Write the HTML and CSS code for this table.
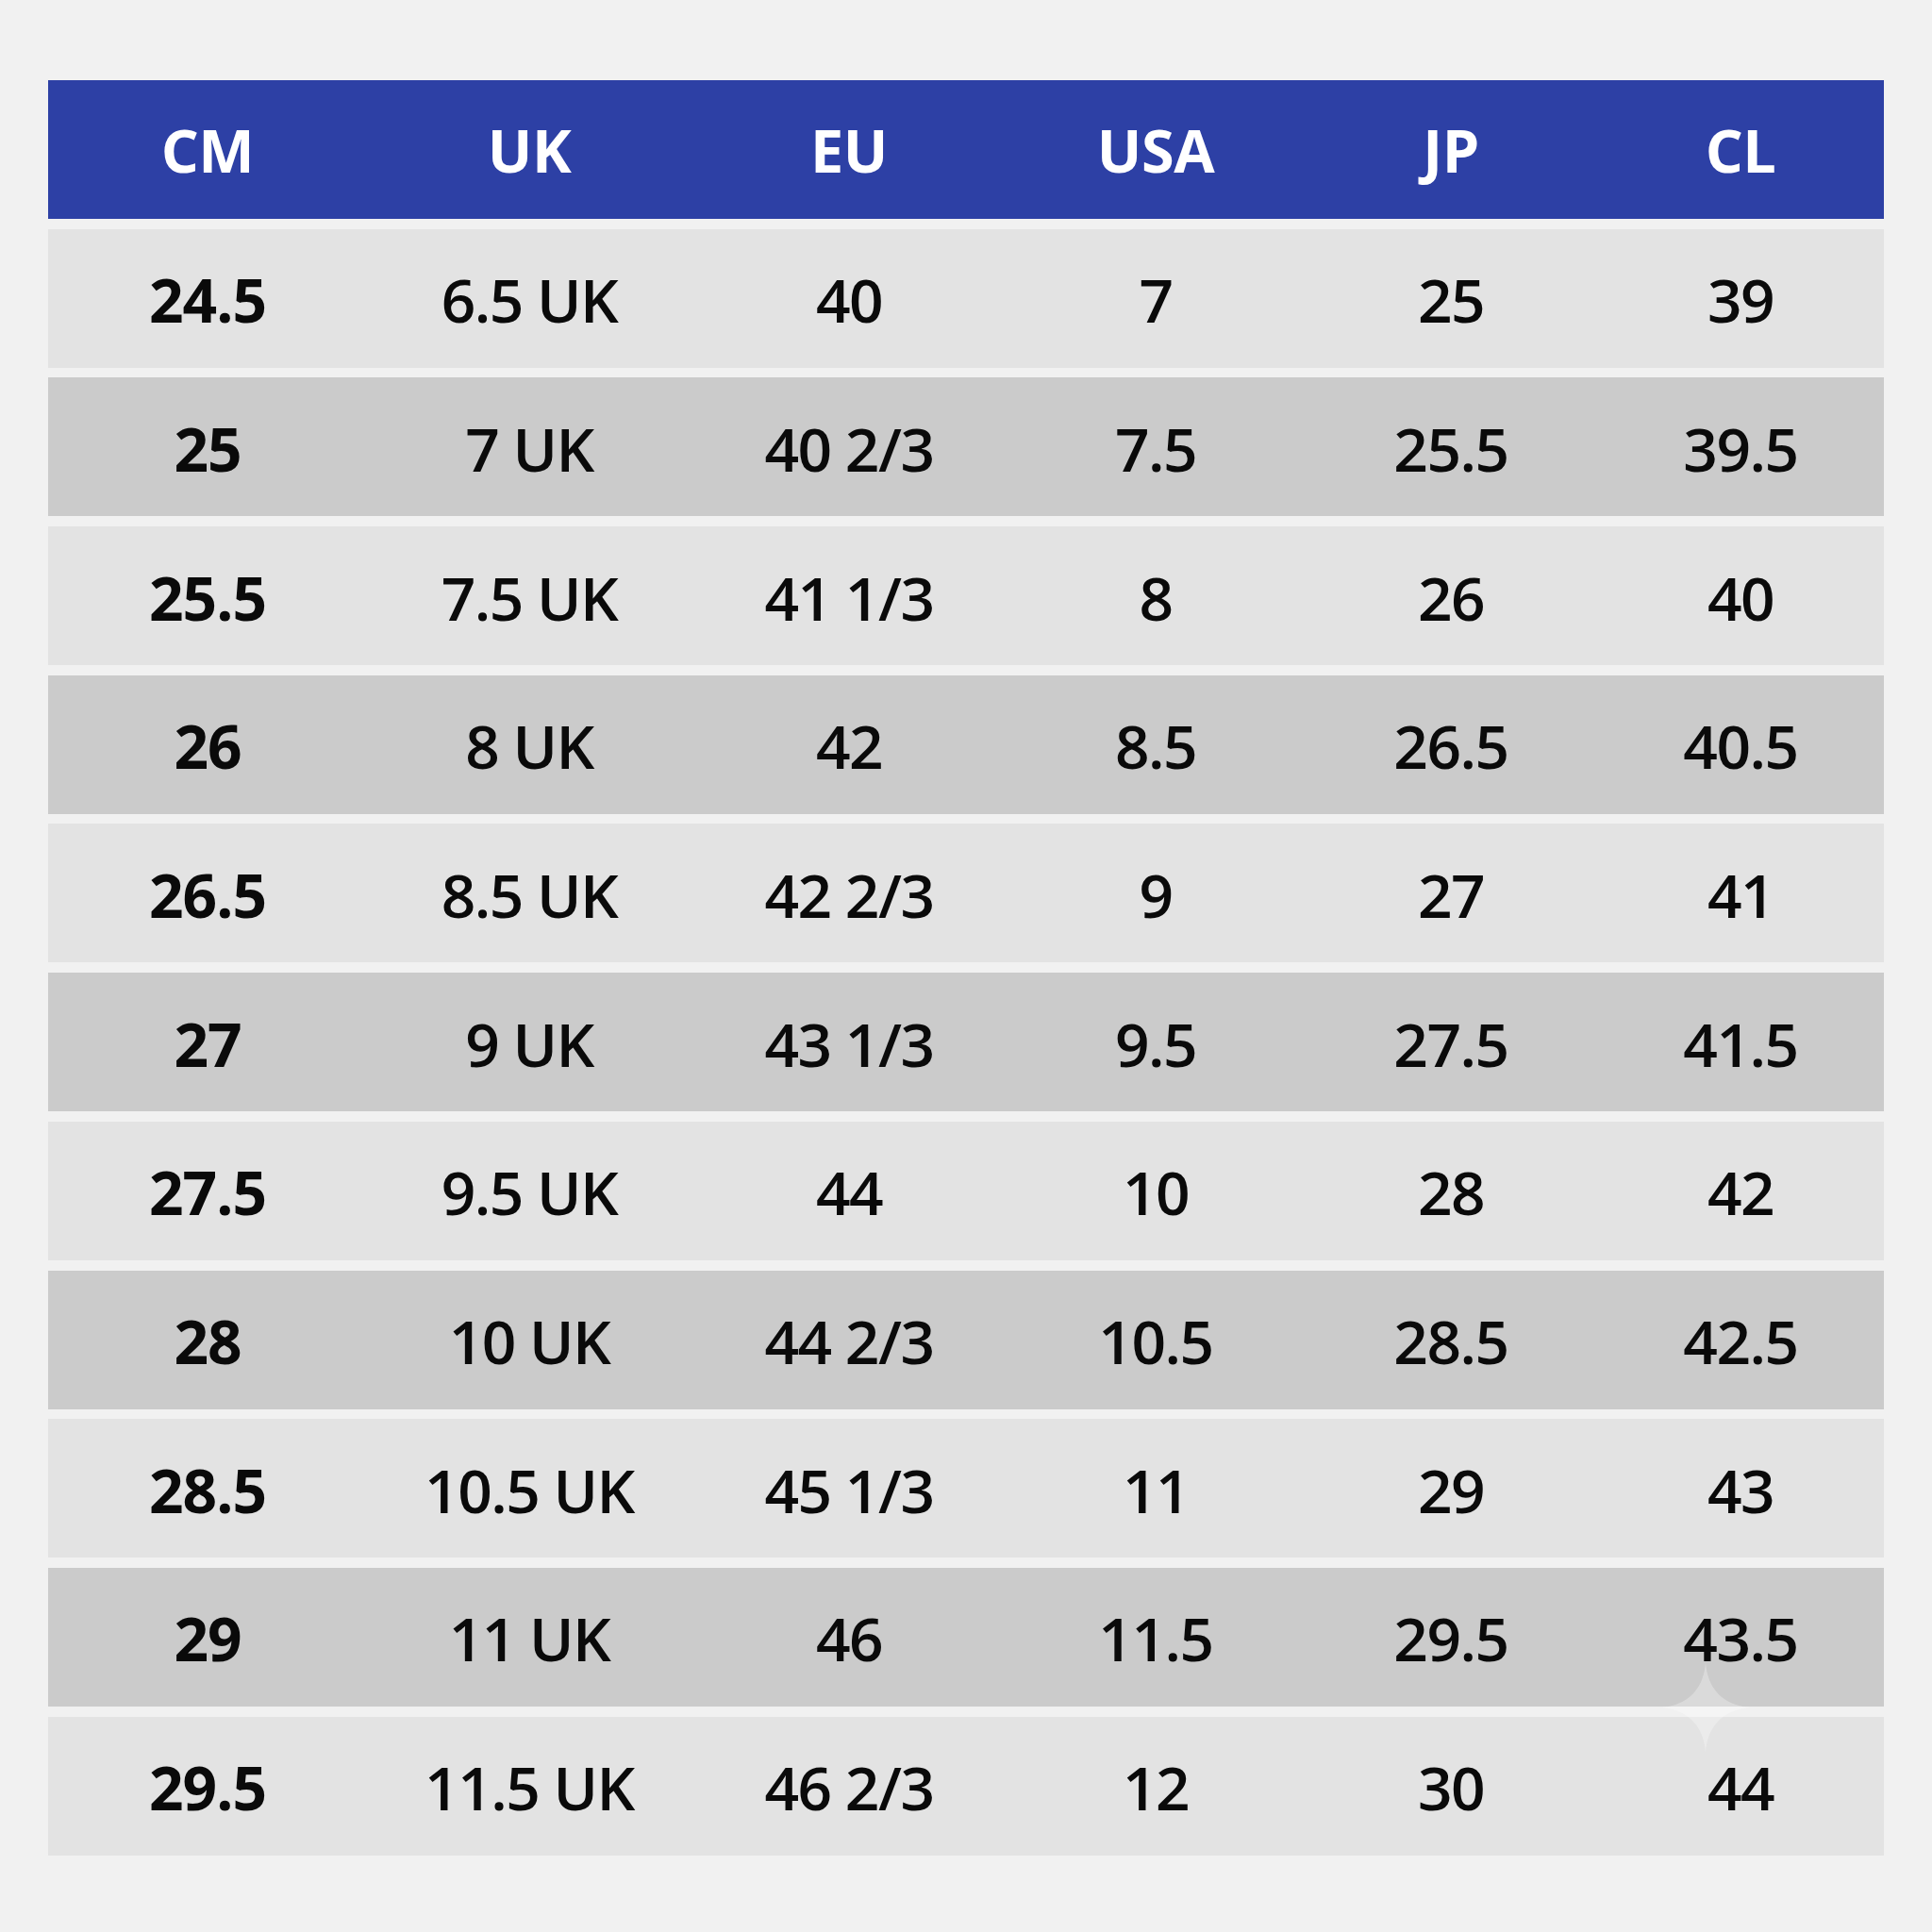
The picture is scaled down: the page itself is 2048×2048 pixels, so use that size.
FILE: index.html
```html
<!DOCTYPE html>
<html>
<head>
<meta charset="utf-8">
<link rel="stylesheet" href="styles.css">
</head>
<body>
<div class="table">
  <div class="row head"><div>CM</div><div>UK</div><div>EU</div><div>USA</div><div>JP</div><div>CL</div></div>
  <div class="row light"><div class="cm">24.5</div><div>6.5 UK</div><div>40</div><div>7</div><div>25</div><div>39</div></div>
  <div class="row dark"><div class="cm">25</div><div>7 UK</div><div>40 2/3</div><div>7.5</div><div>25.5</div><div>39.5</div></div>
  <div class="row light"><div class="cm">25.5</div><div>7.5 UK</div><div>41 1/3</div><div>8</div><div>26</div><div>40</div></div>
  <div class="row dark"><div class="cm">26</div><div>8 UK</div><div>42</div><div>8.5</div><div>26.5</div><div>40.5</div></div>
  <div class="row light"><div class="cm">26.5</div><div>8.5 UK</div><div>42 2/3</div><div>9</div><div>27</div><div>41</div></div>
  <div class="row dark"><div class="cm">27</div><div>9 UK</div><div>43 1/3</div><div>9.5</div><div>27.5</div><div>41.5</div></div>
  <div class="row light"><div class="cm">27.5</div><div>9.5 UK</div><div>44</div><div>10</div><div>28</div><div>42</div></div>
  <div class="row dark"><div class="cm">28</div><div>10 UK</div><div>44 2/3</div><div>10.5</div><div>28.5</div><div>42.5</div></div>
  <div class="row light"><div class="cm">28.5</div><div>10.5 UK</div><div>45 1/3</div><div>11</div><div>29</div><div>43</div></div>
  <div class="row dark"><div class="cm">29</div><div>11 UK</div><div>46</div><div>11.5</div><div>29.5</div><div>43.5</div></div>
  <div class="row light"><div class="cm">29.5</div><div>11.5 UK</div><div>46 2/3</div><div>12</div><div>30</div><div>44</div></div>
  <svg class="sparkle" viewBox="0 0 100 100" width="96" height="96"><path d="M50 0 C52 30 70 48 100 50 C70 52 52 70 50 100 C48 70 30 52 0 50 C30 48 48 30 50 0 Z"/></svg>
</div>
</body>
</html>
```
FILE: styles.css
```css
html, body {
  margin: 0;
  background: #f1f1f1;
}
body {
  padding: 85px 51px;
  font-family: "Open Sans", "Noto Sans", sans-serif;
}
.table {
  position: relative;
  width: 1946px;
  display: flex;
  flex-direction: column;
  gap: 10.7px;
}
.row {
  display: grid;
  grid-template-columns: 338px 344px 334px 316px 310px 304px;
  height: 147px;
  align-items: center;
  text-align: center;
  font-size: 64px;
  font-weight: 600;
  letter-spacing: -1.5px;
  color: #0a0a0a;
  line-height: 1;
  padding-top: 4px;
  box-sizing: border-box;
}
.row.head {
  background: #2d40a5;
  color: #fff;
  font-weight: 700;
  font-size: 63px;
  letter-spacing: -0.5px;
  padding-top: 0;
}
.row.light { background: #e3e3e3; }
.row.dark { background: #cbcbcb; }
.cm { font-weight: 700; letter-spacing: -1px; }
.sparkle {
  position: absolute;
  left: 1709px;
  top: 1677px;
  fill: #ffffff;
  opacity: 0.3;
}
```
